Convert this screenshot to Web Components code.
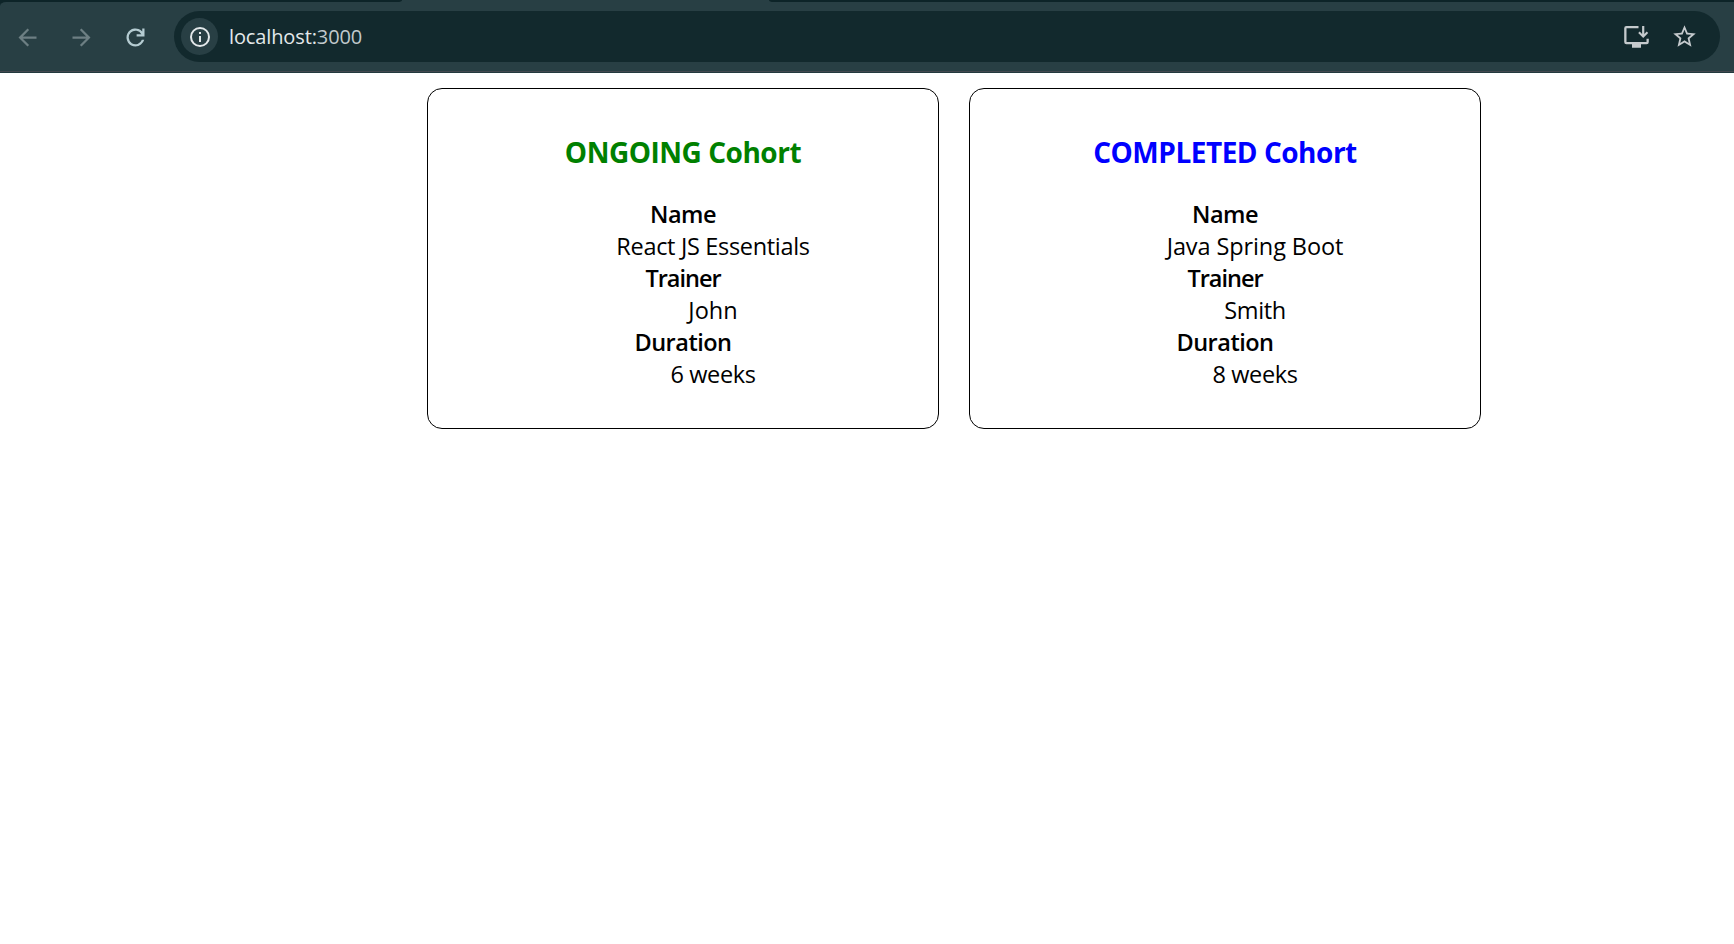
<!DOCTYPE html>
<html lang="en">
<head>
<meta charset="utf-8">
<title>Cohorts</title>
<style>
html,body{margin:0;background:#fff;height:100%;overflow:hidden}
body{font-family:"Open Sans","Noto Sans",sans-serif;color:#000}
</style>
</head>
<body>
<app-window></app-window>
<script>
const define=(name,html)=>customElements.define(name,class extends HTMLElement{
  constructor(){super();const t=document.createElement('template');t.innerHTML=html;
    this.attachShadow({mode:'open'}).append(t.content.cloneNode(true));}
});

define('browser-toolbar',`<style>
:host{display:block;height:73px;background:#0d2428;flex:none}
.tabs{display:flex;justify-content:space-between;height:2px;background:#283f44}
.tabs i{background:#0d2428;height:2px}
.tabs i:first-child{width:402px;border-bottom-right-radius:5px 2px}
.tabs i:last-child{width:965px;border-bottom-left-radius:5px 2px}
.bar{display:flex;flex-direction:column;height:71px;box-sizing:border-box;padding-top:9px;background:#283f44;border-bottom:1px solid #233a3f;border-top-left-radius:6px 4px}
.row{display:flex;align-items:center;height:51px;flex:none}
svg{display:block;flex:none}
.nav{display:flex;gap:27px;padding:1px 0 0 13.5px;width:174px;box-sizing:border-box;fill:#6d7f83}
.pill{flex:1;display:flex;align-items:center;height:51px;border-radius:26px;background:#12292d;margin-right:14px;padding:0 22px 0 7px;box-sizing:border-box;fill:#c5cacd}
.info{display:flex;align-items:center;justify-content:center;width:37px;height:37px;border-radius:50%;background:#283f44}
.url{margin-left:11px;flex:1;font-size:20px;line-height:28px;letter-spacing:-.12px;color:#e3e8ea;white-space:pre}
.url span{color:#c1c9cc}
.star{margin-left:21px}
.line{height:1px;margin-top:9px;background:#43484f}
</style>
<div class="tabs"><i></i><i></i></div>
<div class="bar">
<div class="row">
 <div class="nav">
  <svg width="27" height="27" viewBox="0 0 24 24"><path d="M20 11H7.830l5.590-5.590L12 4l-8 8 8 8 1.410-1.410L7.830 13H20z"/></svg>
  <svg width="27" height="27" viewBox="0 0 24 24"><path d="M4 11h12.170l-5.590-5.590L12 4l8 8-8 8-1.410-1.410L16.170 13H4z"/></svg>
  <svg width="27" height="27" viewBox="0 0 24 24" fill="#b5ccd2"><path d="M12 20a8 8 0 1 1 6-13.290V4h2v7h-7V9h4.200A6 6 0 1 0 17.650 14h2.100A8 8 0 0 1 12 20z"/></svg>
 </div>
 <div class="pill">
  <div class="info"><svg width="22" height="22" viewBox="0 0 22 22" fill="none" stroke="#e3e8ea" stroke-width="2"><circle cx="11" cy="11" r="9"/><path d="M11 10v6M11 6v2"/></svg></div>
  <div class="url">localhost:<span>3000</span></div>
  <svg width="27" height="27" viewBox="0 0 27 27"><path d="M15.500 3v2.200H3.500V19h20v-3.300h2.300V19a2.200 2.200 0 0 1-2.200 2.200H18v3.600H9v-3.600H3.400A2.200 2.200 0 0 1 1.200 19V5.200A2.200 2.200 0 0 1 3.400 3zM19.100 3h2.200v8l2.400-2.400 1.500 1.500-5 5-5-5 1.500-1.500 2.400 2.400z"/></svg>
  <svg class="star" width="27" height="27" viewBox="0 0 24 24"><path d="M22 9.240l-7.190-.62L12 2 9.190 8.630 2 9.240l5.460 4.730L5.820 21 12 17.270 18.180 21l-1.630-7.030zM12 15.400l-3.760 2.270 1-4.280-3.320-2.880 4.380-.38L12 6.100l1.710 4.040 4.380.38-3.320 2.880 1 4.280z"/></svg>
 </div>
</div>
<div class="line"></div>
</div>`);

define('cohort-card',`<style>
:host{display:block;box-sizing:border-box;width:512px;height:341px;border:1px solid #000;border-radius:15px;text-align:center}
h3{margin:45px 0 0;font-size:28px;line-height:36px;font-weight:700;color:var(--status);letter-spacing:-.48px}
dl{margin:28px 0 0;font-size:23.5px;line-height:32px}
</style><h3><slot name="title"></slot></h3><dl><slot></slot></dl>`);

define('cohort-field',`<style>
:host{display:block}
dt{font-weight:600;letter-spacing:var(--t-ls,-.5px)}
dd{margin:0 0 0 60px;letter-spacing:var(--d-ls,-.4px)}
</style><dt><slot name="term"></slot></dt><dd><slot></slot></dd>`);

define('app-window',`<style>
:host{display:flex;flex-direction:column;height:944px}
main{display:flex;gap:30px;padding:15px 0 0 427px}
</style>
<browser-toolbar></browser-toolbar>
<main>
 <cohort-card style="--status:green"><span slot="title">ONGOING Cohort</span>
  <cohort-field style="--d-ls:-.32px"><span slot="term">Name</span>React JS Essentials</cohort-field>
  <cohort-field style="--t-ls:-1px;--d-ls:0px"><span slot="term">Trainer</span>John</cohort-field>
  <cohort-field><span slot="term">Duration</span>6 weeks</cohort-field>
 </cohort-card>
 <cohort-card style="--status:blue"><span slot="title">COMPLETED Cohort</span>
  <cohort-field style="--d-ls:-.1px"><span slot="term">Name</span>Java Spring Boot</cohort-field>
  <cohort-field style="--t-ls:-1px"><span slot="term">Trainer</span>Smith</cohort-field>
  <cohort-field><span slot="term">Duration</span>8 weeks</cohort-field>
 </cohort-card>
</main>`);
</script>
</body>
</html>
